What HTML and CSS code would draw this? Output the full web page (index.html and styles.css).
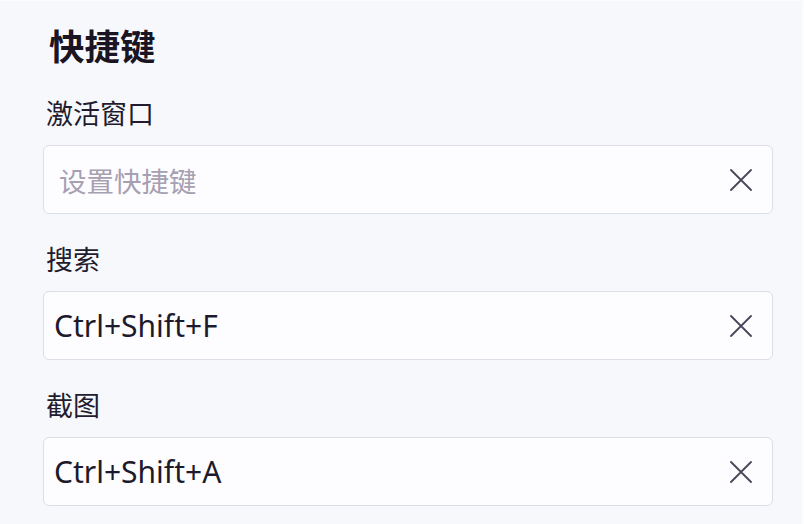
FILE: index.html
```html
<!DOCTYPE html>
<html lang="zh-CN">
<head>
<meta charset="utf-8">
<title>快捷键</title>
<link rel="stylesheet" href="styles.css">
</head>
<body>
<main class="panel">
  <h1 class="title">快捷键</h1>
  <div class="field">
    <label class="label">激活窗口</label>
    <div class="input">
      <span class="value placeholder">设置快捷键</span>
      <svg class="clear" viewBox="0 0 22 22" width="22" height="22"><path d="M1 1 L21 21 M21 1 L1 21" stroke="currentColor" stroke-width="1.8" fill="none" stroke-linecap="round"/></svg>
    </div>
  </div>
  <div class="field">
    <label class="label">搜索</label>
    <div class="input">
      <span class="value">Ctrl+Shift+F</span>
      <svg class="clear" viewBox="0 0 22 22" width="22" height="22"><path d="M1 1 L21 21 M21 1 L1 21" stroke="currentColor" stroke-width="1.8" fill="none" stroke-linecap="round"/></svg>
    </div>
  </div>
  <div class="field">
    <label class="label">截图</label>
    <div class="input">
      <span class="value">Ctrl+Shift+A</span>
      <svg class="clear" viewBox="0 0 22 22" width="22" height="22"><path d="M1 1 L21 21 M21 1 L1 21" stroke="currentColor" stroke-width="1.8" fill="none" stroke-linecap="round"/></svg>
    </div>
  </div>
</main>
</body>
</html>
```

FILE: styles.css
```css
html, body {
  margin: 0;
  padding: 0;
  background: #f7f8fc;
}
body {
  font-family: "Noto Sans", "Noto Sans CJK SC", sans-serif;
  color: #1e1a2b;
}
.panel {
  width: 804px;
  height: 524px;
  box-sizing: border-box;
  padding: 20px 29px 0 43px;
  border-top: 1px solid #fdfdff;
  border-right: 2px solid #fbfcfe;
}
.title {
  margin: 0 0 26px 6px;
  font-family: "Noto Sans CJK SC", sans-serif;
  font-size: 35.5px;
  line-height: 48px;
  font-weight: 700;
  color: #1a1423;
}
.field {
  display: flex;
  flex-direction: column;
  gap: 14px;
  margin-bottom: 27px;
}
.label {
  margin-left: 3px;
  font-family: "Noto Sans CJK SC", sans-serif;
  font-size: 27px;
  line-height: 36px;
  color: #221c2e;
}
.input {
  height: 69px;
  box-sizing: border-box;
  display: flex;
  align-items: center;
  justify-content: space-between;
  padding: 0 20px 0 10px;
  background: #fdfdff;
  border: 1px solid #dcdee8;
  border-radius: 6px;
}
.value {
  font-size: 30px;
  color: #1c1a2c;
}
.placeholder {
  font-family: "Noto Sans CJK SC", sans-serif;
  font-size: 27.5px;
  color: #a79fb2;
  padding-left: 5px;
}
.clear {
  color: #4a4458;
}
```
